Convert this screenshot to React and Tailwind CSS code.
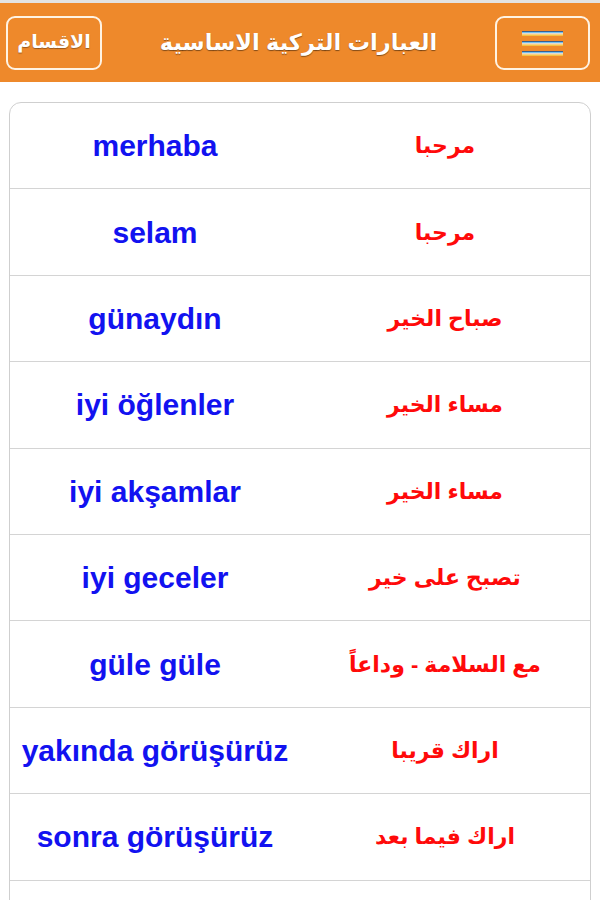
import React from 'react';

const rows = [
  ['merhaba', 'مرحبا'],
  ['selam', 'مرحبا'],
  ['günaydın', 'صباح الخير'],
  ['iyi öğlenler', 'مساء الخير'],
  ['iyi akşamlar', 'مساء الخير'],
  ['iyi geceler', 'تصبح على خير'],
  ['güle güle', 'مع السلامة - وداعاً'],
  ['yakında görüşürüz', 'اراك قريبا'],
  ['sonra görüşürüz', 'اراك فيما بعد'],
];

// striped menu lines: navy, sky blue, white, yellow
const Hamburger = () => (
  <svg width="41" height="28" viewBox="0 0 41 28">
    {[2, 12, 22].map(y => (
      <g key={y}>
        <rect x="0" y={y} width="41" height="1" fill="#3a5f8f" />
        <rect x="0" y={y + 1} width="41" height="1.4" fill="#6fc0f0" />
        <rect x="0" y={y + 2.4} width="41" height="1.2" fill="#ffffff" />
        <rect x="0" y={y + 3.6} width="41" height="1.2" fill="#f7d24a" />
      </g>
    ))}
  </svg>
);

export default function App() {
  return (
    <div className="w-[600px] h-[900px] overflow-hidden bg-white font-['Liberation_Sans','DejaVu_Sans',sans-serif]">
      <div className="h-[3px] bg-[#e3e3e3]" />
      {/* Header */}
      <div className="h-[79px] bg-[#ee892b] flex items-center justify-between pl-[6px] pr-[10px]">
        <button className="w-[96px] h-[54px] border-2 border-[#fff3e3] rounded-[9px] text-white font-bold text-[19px] flex items-center justify-center [text-shadow:0_1px_1px_rgba(0,0,0,0.35)]">
          الاقسام
        </button>
        <h1 dir="rtl" className="text-white font-bold text-[22.5px] [text-shadow:0_1px_1px_rgba(0,0,0,0.45)]">
          العبارات التركية الاساسية
        </h1>
        <button className="w-[95px] h-[54px] border-2 border-[#fff3e3] rounded-[9px] flex items-center justify-center">
          <Hamburger />
        </button>
      </div>

      {/* Table */}
      <div className="mt-[20px] mx-[9px] border border-[#cfcfcf] rounded-t-[12px] overflow-hidden">
        {rows.map(([tr, ar], i) => (
          <div key={i} className="h-[86.4px] border-b border-[#d4d4d4] flex items-center">
            <div className="w-1/2 text-center text-[30px] font-bold text-[#1212f0]">{tr}</div>
            <div dir="rtl" className="w-1/2 text-center text-[22px] font-bold text-[#ff0a0a]">{ar}</div>
          </div>
        ))}
        <div className="h-[86.4px]" />
      </div>
    </div>
  );
}
